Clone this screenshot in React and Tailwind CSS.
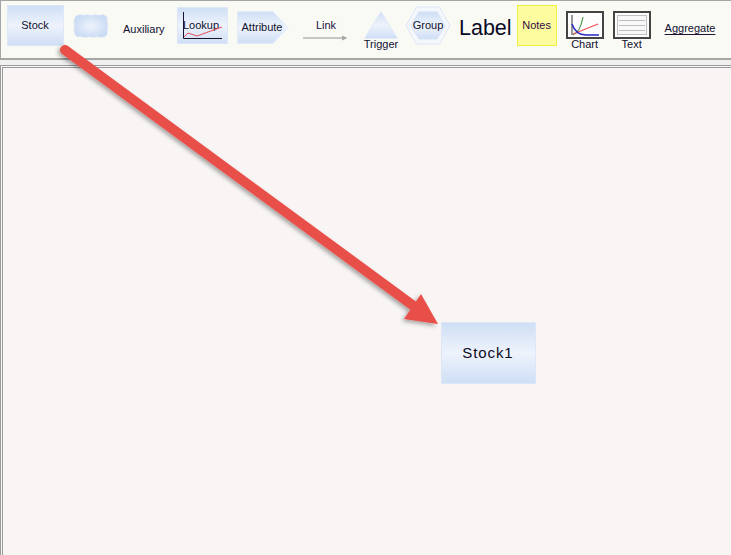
const labelFont = { fontFamily: '"Liberation Sans", Arial, sans-serif' };

function Gradient({ id }) {
  return (
    <linearGradient id={id} x1="0" y1="0" x2="0" y2="1">
      <stop offset="0" stopColor="#cfdff5" />
      <stop offset="0.5" stopColor="#eef3fc" />
      <stop offset="1" stopColor="#cfdff5" />
    </linearGradient>
  );
}

const blockClass = 'bg-gradient-to-b from-[#cfdff5] via-[#eef3fc] to-[#cfdff5] border border-[#dde7f7]';

function Toolbar() {
  return (
    <div className="flex items-start h-[60px] bg-[#fafaf5] border-t border-l border-b-2 border-[#a5a5a5] text-[11px] text-[#101030]">
      {/* Stock */}
      <div className={`${blockClass} ml-[6px] mt-[4px] w-[57px] h-[41px] flex justify-center pt-[10px] pr-[1px] leading-[18px] text-[11px]`}>
        Stock
      </div>

      {/* Flow cloud */}
      <svg className="ml-[9px] mt-[13px]" width="36" height="24" viewBox="0 0 36 24">
        <defs>
          <radialGradient id="cloud" cx="0.5" cy="0.5" r="0.55">
            <stop offset="0" stopColor="#eef3fc" />
            <stop offset="1" stopColor="#c9dbf4" />
          </radialGradient>
        </defs>
        <path
          d="M4 1.500 Q7 0 10 1.500 Q14 0 18 1.500 Q22 0 26 1.500 Q30 0 32 1.500 Q35 3 34 7 Q35.500 12 34 17 Q35 21 32 22.500 Q28 24 24 22.500 Q20 24 16 22.500 Q12 24 8 22.500 Q3 23.500 2 20 Q0.500 16 1.500 12 Q0.500 8 1.500 5 Q2 2.500 4 1.500Z"
          fill="url(#cloud)"
          stroke="#dbe6f7"
          strokeWidth="1"
          strokeDasharray="2 1"
        />
      </svg>

      <div className="ml-[14px] mt-[19px] leading-[18px] w-[43px] whitespace-nowrap">Auxiliary</div>

      {/* Lookup */}
      <div className={`${blockClass} relative ml-[11px] mt-[6px] w-[51px] h-[37px] flex justify-center pt-[10px] pr-[3px] leading-[15px] text-[#101030]`}>
        <span>Lookup</span>
        <svg className="absolute left-0 top-0" width="51" height="37" viewBox="0 0 51 37">
          <path d="M5.500 4V30.500H44" fill="none" stroke="#15152b" strokeWidth="1" />
          <path d="M6 29L10 25L19 28L30 24L44 19" fill="none" stroke="#e8505a" strokeWidth="1" />
        </svg>
      </div>

      {/* Attribute */}
      <div className="relative ml-[9px] mt-[10px] w-[52px] h-[33px] flex justify-center pt-[8px] pr-[2px] leading-[17px]">
        <svg className="absolute left-0 top-0" width="52" height="33" viewBox="0 0 52 33">
          <defs><Gradient id="attribute" /></defs>
          <path d="M0.500 0.500H36L51 16.500L36 32.500H0.500Z" fill="url(#attribute)" stroke="#e4ecf9" />
        </svg>
        <span className="relative">Attribute</span>
      </div>

      {/* Link */}
      <div className="ml-[14px] mt-[16px] w-[46px] flex flex-col items-center">
        <span className="leading-[17px] text-[#201040]">Link</span>
        <svg className="mt-[1px]" width="46" height="6" viewBox="0 0 46 6">
          <path d="M0 3H40" stroke="#b4b4b4" strokeWidth="1.500" />
          <path d="M39 0.500L44.500 3L39 5.500Z" fill="#a8a8a8" />
        </svg>
      </div>

      {/* Trigger */}
      <div className="ml-[14px] mt-[10px] w-[36px] flex flex-col items-center">
        <svg width="34" height="28" viewBox="0 0 34 28">
          <defs><Gradient id="trigger" /></defs>
          <path d="M17 0.500L33.500 27.500H0.500Z" fill="url(#trigger)" stroke="#e0e9f8" />
        </svg>
        <span className="leading-[11px] whitespace-nowrap">Trigger</span>
      </div>

      {/* Group */}
      <div className="relative ml-[6px] mt-[5px] w-[46px] h-[39px] flex justify-center pt-[11px] leading-[17px]">
        <svg className="absolute left-0 top-0" width="46" height="39" viewBox="0 0 46 39">
          <defs><Gradient id="group" /></defs>
          <path d="M11.500 1H34.500L45 19.500L34.500 38H11.500L1 19.500Z" fill="#f4f7fc" stroke="#dce6f6" />
          <path d="M14 6H32L40 19.500L32 33H14L6 19.500Z" fill="url(#group)" stroke="#d5e1f5" />
        </svg>
        <span className="relative">Group</span>
      </div>

      <div className="ml-[8px] mt-[14px] text-[21.500px] leading-[27px] text-[#0a0a25]">Label</div>

      {/* Notes */}
      <div className="ml-[5px] mt-[4px] w-[40px] h-[41px] bg-[#fdfda0] border border-[#f0f040] flex justify-center pt-[10px] leading-[18px] text-[#300a40]">
        Notes
      </div>

      {/* Chart */}
      <div className="ml-[9px] mt-[10px] w-[38px] flex flex-col items-center">
        <svg width="38" height="28" viewBox="0 0 38 28">
          <rect x="1" y="1" width="36" height="26" fill="#fdfdfd" stroke="#444" strokeWidth="2" />
          <path d="M6 4V24" fill="none" stroke="#999" strokeWidth="2" />
          <path d="M7 24C12 22 15 17 17 6" fill="none" stroke="#4a9a4a" strokeWidth="1.200" />
          <path d="M7 23L32 13" fill="none" stroke="#f0505a" strokeWidth="1.200" />
          <path d="M6 13C8 19 12 24 20 24H33" fill="none" stroke="#2828c0" strokeWidth="1.500" />
        </svg>
        <span className="leading-[11px]">Chart</span>
      </div>

      {/* Text */}
      <div className="ml-[9px] mt-[10px] w-[38px] flex flex-col items-center">
        <svg width="38" height="28" viewBox="0 0 38 28">
          <rect x="1" y="1" width="36" height="26" fill="#fdfdfd" stroke="#444" strokeWidth="2" />
          <rect x="4.500" y="4.500" width="29" height="19" fill="#f8f8f8" stroke="#c0c0c0" />
          <path d="M6 9.500H32M6 14.500H32M6 19.500H32" stroke="#bdbdbd" strokeWidth="1" />
        </svg>
        <span className="leading-[11px]">Text</span>
      </div>

      <div className="ml-[14px] mt-[19px] leading-[17px] underline underline-offset-2 decoration-[#201030] whitespace-nowrap">
        Aggregate
      </div>
    </div>
  );
}

export default function App() {
  return (
    <div className="relative w-[731px] h-[555px] overflow-hidden bg-[#f0f0f0]" style={labelFont}>
      <Toolbar />

      <div className="mt-[5px] h-[490px] border-t border-l border-[#9a9a9a] bg-[#f7f7f7] pt-[1px] pl-[1px]">
        <div className="relative h-full border-t border-l border-[#9a9a9a] bg-[#f9f5f5]">
          {/* Node placed on the canvas */}
          <div className={`${blockClass} absolute left-[438px] top-[254px] w-[95px] h-[62px] flex items-center justify-center pr-[1px] text-[15px] tracking-[0.9px] text-[#0a0a1c]`}>
            Stock1
          </div>
        </div>
      </div>

      {/* Red annotation arrow lying over everything */}
      <svg className="absolute left-0 top-0 pointer-events-none" width="731" height="555" viewBox="0 0 731 555">
        <defs>
          <filter id="arrowShadow" x="-10%" y="-10%" width="120%" height="120%">
            <feDropShadow dx="-2" dy="2" stdDeviation="2" floodColor="#000" floodOpacity="0.35" />
          </filter>
        </defs>
        <g filter="url(#arrowShadow)">
          <path d="M65 50L415 307" stroke="#e94f4a" strokeWidth="10" strokeLinecap="round" fill="none" />
          <path d="M404 319L421 294L438 324Z" fill="#e94f4a" />
        </g>
      </svg>
    </div>
  );
}
